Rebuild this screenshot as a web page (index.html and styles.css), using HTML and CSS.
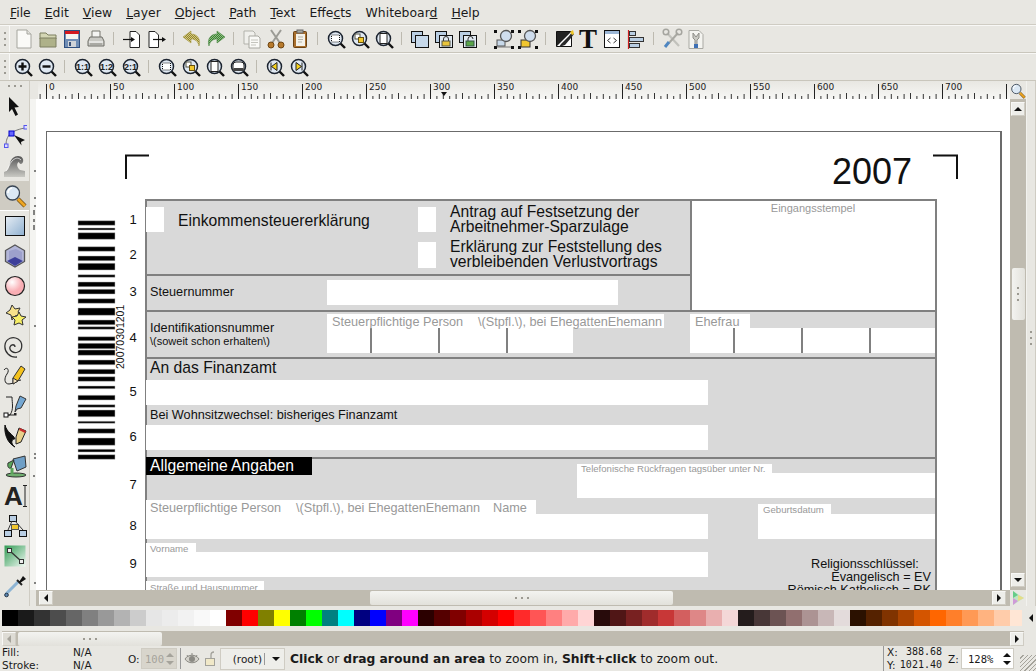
FILE: index.html
```html
<!DOCTYPE html>
<html>

<head>
  <title>Inkscape</title>
  <link rel="stylesheet" href="styles.css">
</head>

<body>
  <svg class="defs" width="0" height="0">
    <defs>
      <pattern id="check-y" patternUnits="userSpaceOnUse" width="2" height="2"><rect width="2" height="2" fill="#d6cb7a" /><rect width="1" height="1" fill="#8f8334" /><rect x="1" y="1" width="1" height="1" fill="#8f8334" /></pattern>
      <pattern id="check-g" patternUnits="userSpaceOnUse" width="2" height="2"><rect width="2" height="2" fill="#8cc47e" /><rect width="1" height="1" fill="#3f7a38" /><rect x="1" y="1" width="1" height="1" fill="#3f7a38" /></pattern>
      <symbol id="lens" viewBox="0 0 24 24">
        <line x1="16.500" y1="16.500" x2="21" y2="21" stroke="#111" stroke-width="2.400" />
        <circle cx="11.500" cy="11.500" r="7" fill="#dfe8f2" stroke="#1c2430" stroke-width="1.500" />
      </symbol>
      <symbol id="i-new" viewBox="0 0 24 24"><path d="M5 3h10l4 4v14H5z" fill="#fafaf7" stroke="#a5a59e" /><path d="M15 3v4h4" fill="#e4e4de" stroke="#a5a59e" /></symbol>
      <symbol id="i-open" viewBox="0 0 24 24"><path d="M4 6h6l2 2h8v4H4z" fill="#d4d6b4" stroke="#7d7f60" /><path d="M4 11h16v9H4z" fill="#aeb189" stroke="#7d7f60" /></symbol>
      <symbol id="i-save" viewBox="0 0 24 24"><rect x="4.500" y="3.500" width="15" height="17" fill="#6f8db5" stroke="#2f4f7f" /><rect x="5" y="4" width="14" height="3" fill="#d3181f" /><rect x="6" y="7" width="12" height="5" fill="#f4f4f0" /><rect x="8" y="14" width="8" height="6" fill="#cfd3d8" /><rect x="9" y="15" width="2" height="4" fill="#38517a" /></symbol>
      <symbol id="i-print" viewBox="0 0 24 24"><path d="M8 4h8v7H8z" fill="#f4f4f2" stroke="#77776f" /><path d="M6 10h12l2 4v5H4v-5z" fill="#c9c9c4" stroke="#6f6f68" /><path d="M5 15h14" stroke="#fff" /><path d="M6 17h12" stroke="#8a8a84" /></symbol>
      <symbol id="i-import" viewBox="0 0 24 24"><path d="M10 4.500h6l3.500 3.500v12.500H10z" fill="#fff" stroke="#222" /><path d="M3 12.500h10" stroke="#111" stroke-width="1.200" /><path d="M11 10l4 2.500-4 2.500z" fill="#111" /></symbol>
      <symbol id="i-export" viewBox="0 0 24 24"><path d="M5 4.500h6l3.500 3.500v12.500H5z" fill="#fff" stroke="#222" /><path d="M9 12.500h10" stroke="#111" stroke-width="1.200" /><path d="M18 10l4 2.500-4 2.500z" fill="#111" /></symbol>
      <symbol id="i-undo" viewBox="0 0 24 24"><path d="M11 4L3 10l8 6v-4c4 0 7 2 8 7 2-6-1-12-8-12z" fill="url(#check-y)" stroke="#a89a45" stroke-width=".6" /></symbol>
      <symbol id="i-redo" viewBox="0 0 24 24"><path d="M13 4l8 6-8 6v-4c-4 0-7 2-8 7-2-6 1-12 8-12z" fill="url(#check-g)" stroke="#4f8a48" stroke-width=".6" /></symbol>
      <symbol id="i-copy" viewBox="0 0 24 24"><path d="M4 4h9l2 2v11H4z" fill="#f0f0ec" stroke="#b2b2ab" /><path d="M9 9h9l2 2v10H9z" fill="#fafaf7" stroke="#a8a8a1" /><path d="M11 13h7M11 15.500h7M11 18h5" stroke="#c4c4bd" /></symbol>
      <symbol id="i-cut" viewBox="0 0 24 24"><path d="M7 3l9 13M17 3L8 16" stroke="#9b9b95" stroke-width="2" /><circle cx="7" cy="18" r="3" fill="#b77a2c" stroke="#6e4512" /><circle cx="17" cy="18" r="3" fill="#b77a2c" stroke="#6e4512" /></symbol>
      <symbol id="i-paste" viewBox="0 0 24 24"><rect x="5.500" y="4.500" width="13" height="16" rx="1" fill="#a96f2d" stroke="#6a4214" /><rect x="8" y="7" width="9" height="12" fill="#f4f2ea" /><rect x="9" y="3" width="6" height="3" fill="#a8a89f" stroke="#666" /><path d="M10 10h5M10 12.500h5M10 15h4" stroke="#b5b3a8" /></symbol>
      <symbol id="z-sel" viewBox="0 0 24 24"><use href="#lens" /><rect x="7.500" y="8" width="8" height="7" fill="#fff" stroke="#111" stroke-dasharray="1 1" /></symbol>
      <symbol id="z-draw" viewBox="0 0 24 24"><use href="#lens" /><rect x="7" y="7" width="5" height="5" fill="#fff" stroke="#554" /><rect x="10.500" y="10.500" width="5" height="5" fill="#f3c92c" stroke="#665010" /></symbol>
      <symbol id="z-page" viewBox="0 0 24 24"><use href="#lens" /><rect x="8" y="6.500" width="7" height="10" fill="#fff" stroke="#222" /></symbol>
      <symbol id="z-width" viewBox="0 0 24 24"><use href="#lens" /><path d="M6 15v-5q0-3 3-3h5q3 0 3 3v5z" fill="#fff" stroke="#222" /><rect x="6.500" y="13" width="10" height="3" fill="#444" /></symbol>
      <symbol id="z-in" viewBox="0 0 24 24"><use href="#lens" /><path d="M7.500 11.500h8M11.500 7.500v8" stroke="#111" stroke-width="2.400" /></symbol>
      <symbol id="z-out" viewBox="0 0 24 24"><use href="#lens" /><path d="M7.500 11.500h8" stroke="#111" stroke-width="2.400" /></symbol>
      <symbol id="z-11" viewBox="0 0 24 24"><use href="#lens" /><text class="lens-text" x="11.500" y="15">1:1</text></symbol>
      <symbol id="z-12" viewBox="0 0 24 24"><use href="#lens" /><text class="lens-text" x="11.500" y="15">1:2</text></symbol>
      <symbol id="z-21" viewBox="0 0 24 24"><use href="#lens" /><text class="lens-text" x="11.500" y="15">2:1</text></symbol>
      <symbol id="z-prev" viewBox="0 0 24 24"><use href="#lens" /><path d="M8.500 11.500L14 7.500v8z" fill="#f6d21e" stroke="#222" /><path d="M8 7.500v8" stroke="#222" /></symbol>
      <symbol id="z-next" viewBox="0 0 24 24"><use href="#lens" /><path d="M14.500 11.500L9 7.500v8z" fill="#f6d21e" stroke="#222" /><path d="M15 7.500v8" stroke="#222" /></symbol>
      <symbol id="i-dup" viewBox="0 0 24 24"><rect x="3.500" y="4.500" width="11" height="11" fill="#b9cee3" stroke="#111" /><rect x="7.500" y="8.500" width="13" height="12" fill="#c7d9ea" stroke="#111" /></symbol>
      <symbol id="i-clone" viewBox="0 0 24 24"><rect x="3.500" y="4.500" width="11" height="11" fill="#b9cee3" stroke="#111" /><rect x="7.500" y="8.500" width="13" height="12" fill="#dfe8f0" stroke="#111" /><path d="M11.500 14v-2a2.500 2.500 0 015 0v2" fill="none" stroke="#333" /><rect x="10" y="14" width="8" height="5" fill="#e9c43a" stroke="#554" /></symbol>
      <symbol id="i-unlink" viewBox="0 0 24 24"><rect x="3.500" y="4.500" width="11" height="11" fill="#b9cee3" stroke="#111" /><rect x="7.500" y="8.500" width="13" height="12" fill="#dfe8f0" stroke="#111" /><path d="M12 14v-2a2.500 2.500 0 015 0" fill="none" stroke="#333" /><rect x="10" y="14" width="8" height="5" fill="#5aa548" stroke="#354" /></symbol>
      <symbol id="i-group" viewBox="0 0 24 24"><path d="M2 3h3v3H2zM19 3h3v3h-3zM2 19h3v3H2zM19 19h3v3h-3z" fill="#111" /><path d="M5 20h14" stroke="#777" /><rect x="5" y="13" width="8" height="6" fill="#c8d9ea" stroke="#555" /><circle cx="14" cy="9" r="5.500" fill="#cfdded" stroke="#555" stroke-width="1.300" /></symbol>
      <symbol id="i-ungroup" viewBox="0 0 24 24"><path d="M2 3h3v3H2zM19 3h3v3h-3zM2 19h3v3H2zM19 19h3v3h-3z" fill="#111" /><rect x="5" y="13" width="9" height="7" fill="#f1c62e" stroke="#333" /><circle cx="14" cy="9" r="5.500" fill="#cfdded" stroke="#555" stroke-width="1.300" /></symbol>
      <symbol id="i-fill" viewBox="0 0 24 24"><path d="M4.500 4.500h15v15h-15z" fill="#222" stroke="#111" /><path d="M5 19L19 5v14z" fill="#fff" /><path d="M9 17l8-8 3-4 2 2-3 4-6 7-6 2z" fill="#2a2a2a" /><path d="M18 5l3-2 1 4-2 1z" fill="#f0c82a" /></symbol>
      <symbol id="i-text" viewBox="0 0 24 24"><text class="big-t" x="12" y="21">T</text></symbol>
      <symbol id="i-xml" viewBox="0 0 24 24"><rect x="4.500" y="3.500" width="15" height="17" fill="#fff" stroke="#111" /><rect x="5" y="4" width="14" height="3" fill="#9cb7d6" /><path d="M10.500 11l-3 2.500 3 2.500M13.500 11l3 2.500-3 2.500" fill="none" stroke="#333" /></symbol>
      <symbol id="i-align" viewBox="0 0 24 24"><path d="M4.500 3v19" stroke="#cc1f1f" stroke-width="1.200" /><rect x="5.500" y="4.500" width="6" height="4" fill="#b9cee3" stroke="#333" /><rect x="5.500" y="10.500" width="14" height="4" fill="#b9cee3" stroke="#333" /><rect x="5.500" y="16.500" width="10" height="4" fill="#b9cee3" stroke="#333" /></symbol>
      <symbol id="i-prefs" viewBox="0 0 24 24"><path d="M7 6l12 13" stroke="#c2c2bc" stroke-width="2.200" /><path d="M18 6L9 16" stroke="#a9a9a3" stroke-width="2" /><path d="M9 15l-4 5" stroke="#4f86c0" stroke-width="3" /><circle cx="6" cy="5" r="2.800" fill="none" stroke="#a5a59f" stroke-width="1.500" /><circle cx="19" cy="5" r="2.800" fill="none" stroke="#a5a59f" stroke-width="1.500" /></symbol>
      <symbol id="i-doc" viewBox="0 0 24 24"><path d="M5 3.500h10l4 4v14H5z" fill="#f4f4f0" stroke="#a9a9a3" /><path d="M9 6l3 4 3-4v5l-2 2v7h-2v-7L9 11z" fill="#c9c9c3" stroke="#8e8e88" /><rect x="10" y="17" width="4" height="4" fill="#3e70b4" /></symbol>

      <symbol id="t-select" viewBox="0 0 24 24"><path d="M6 3l10 10-4.500.5 3.500 7-2.500 1.500-3.500-7L6 18z" fill="#111" /></symbol>
      <symbol id="t-node" viewBox="0 0 24 24"><path d="M3 22c0-8 2-15 19-18" fill="none" stroke="#777" /><rect x="6" y="7" width="5" height="5" fill="#66f" stroke="#00c" /><rect x="21" y="1.500" width="3.500" height="3.500" fill="#ddf" stroke="#55e" /><rect x="1.500" y="20" width="3.500" height="3.500" fill="#ddf" stroke="#55e" /><path d="M11 11l11 5-4 2 .5 3.500z" fill="#111" /></symbol>
      <symbol id="t-tweak" viewBox="0 0 24 24"><defs><linearGradient id="g-tweak" x2="0" y2="1"><stop offset="0" stop-color="#555" /><stop offset="1" stop-color="#c9c9c4" /></linearGradient></defs><path d="M1 23v-5c4-1 5-5 6-9s4-7 8-7 6 3 5 6-4 2-4 0c-3 1-2 6 1 8l5 1v6z" fill="url(#g-tweak)" /><path d="M3 17c3-3 3-7 6-10s6-4 9-1" fill="none" stroke="#fff" stroke-width=".7" /></symbol>
      <symbol id="t-zoom" viewBox="0 0 24 24"><path d="M15 15l7 7" stroke="#6e4a10" stroke-width="4.200" /><path d="M15 15l7 7" stroke="#eda522" stroke-width="2.800" /><circle cx="9.500" cy="9" r="7" fill="#dbe8f4" stroke="#3a4654" stroke-width="1.300" /><path d="M5 9a5 5 0 014-5" fill="none" stroke="#fff" stroke-width="1.500" /></symbol>
      <symbol id="t-rect" viewBox="0 0 24 24"><defs><linearGradient id="g-rect" x2="1" y2="1"><stop offset="0" stop-color="#e6edf4" /><stop offset="1" stop-color="#8fb0d0" /></linearGradient></defs><rect x="2.500" y="2.500" width="19" height="19" fill="url(#g-rect)" stroke="#111" /></symbol>
      <symbol id="t-box" viewBox="0 0 24 24"><path d="M12 1l9.500 5.500v11L12 23l-9.500-5.500v-11z" fill="#b3b6d8" stroke="#555" stroke-width="1.300" /><path d="M6 7l7-2 6 3v8l-13 0z" fill="#9da0cc" /><path d="M4 17l8-4 8 4-8 5z" fill="#3d3f9a" /></symbol>
      <symbol id="t-ell" viewBox="0 0 24 24"><defs><radialGradient id="g-ell" cx=".35" cy=".3"><stop offset="0" stop-color="#fff" /><stop offset="1" stop-color="#f9aeb4" /></radialGradient></defs><circle cx="12" cy="12" r="9.500" fill="url(#g-ell)" stroke="#222" stroke-width="1.200" /></symbol>
      <symbol id="t-star" viewBox="0 0 24 24"><path d="M9 1l3 4 5-1-2 4 2 3-5 1-3 4-1-5-5-2 4-3z" fill="#f7e28b" stroke="#333" /><path d="M16 8l2 4 5 1-4 3 1 5-4-2-5 2 1-5-3-3 5-1z" fill="#f6ee66" stroke="#333" /></symbol>
      <symbol id="t-spiral" viewBox="0 0 24 24"><path d="M12 13c0-3-4-3-5 0s3 7 8 5 5-10 0-13S3 4 2 11s5 13 12 12" fill="none" stroke="#333" stroke-width="1.300" /></symbol>
      <symbol id="t-pencil" viewBox="0 0 24 24"><path d="M1 6c3-4 6 0 3 4s-3 10 2 10 8-4 12-4" fill="none" stroke="#222" /><path d="M18 2l4 3-7 12-5 3 0-6z" fill="#f4c21c" stroke="#333" /><path d="M10 20l0-6 5 3z" fill="#f3e2c0" stroke="#333" /></symbol>
      <symbol id="t-pen" viewBox="0 0 24 24"><path d="M3 3h6c0 6 2 12-2 18H3" fill="none" stroke="#222" /><rect x="1" y="19" width="4" height="4" fill="#fff" stroke="#111" /><path d="M5 21h6" stroke="#222" /><rect x="11" y="19" width="2.500" height="2.500" fill="#222" /><path d="M17 2l6 3-5 9-4 1-2 3 1-6z" fill="#74a7d2" stroke="#333" /></symbol>
      <symbol id="t-callig" viewBox="0 0 24 24"><path d="M2 1c-1 8 2 18 10 22-6-4-2-9 0-8-2-5-8-6-10-14z" fill="#111" stroke="#111" /><path d="M16 4l7 3-5 11-5 2 0-7z" fill="#e8d08a" stroke="#222" /><path d="M17 4l6 3-1 2-6-3z" fill="#c92c2c" /></symbol>
      <symbol id="t-bucket" viewBox="0 0 24 24"><ellipse cx="13" cy="21" rx="10" ry="2" fill="#6fae6f" stroke="#333" /><path d="M10 5l12-3 1 11-9 4z" fill="#6f9fc6" stroke="#333" /><path d="M5 9c-1 4 1 6 3 5l3-8z" fill="#5aa55a" stroke="#333" /><path d="M9 14v6" stroke="#5aa55a" stroke-width="3" /></symbol>
      <symbol id="t-text" viewBox="0 0 24 24"><text class="big-a" x="1" y="21">A</text><path d="M20 1.500h4M22 1.500v21M20 22.500h4" stroke="#222" fill="none" /></symbol>
      <symbol id="t-tree" viewBox="0 0 24 24"><rect x="6.500" y="1.500" width="7" height="6" fill="#b9cee3" stroke="#111" /><rect x="8.500" y="10.500" width="7" height="5" fill="#f1c62e" stroke="#555" /><rect x="1.500" y="16.500" width="7" height="6" fill="#b9cee3" stroke="#111" /><rect x="16.500" y="16.500" width="7" height="6" fill="#b9cee3" stroke="#111" /><path d="M9 7L5 16M12 7l8 9" fill="none" stroke="#333" /></symbol>
      <symbol id="t-conn" viewBox="0 0 24 24"><defs><linearGradient id="g-conn" x2="1" y2="1"><stop offset="0" stop-color="#2f9a52" /><stop offset="1" stop-color="#f2f9f4" /></linearGradient></defs><rect x="1.500" y="1.500" width="21" height="21" fill="url(#g-conn)" /><path d="M7 7l11 10" stroke="#333" stroke-width="1.300" /><rect x="4.500" y="4.500" width="4" height="4" fill="#eee" stroke="#333" /><rect x="16.500" y="15.500" width="4" height="4" fill="#eee" stroke="#333" /></symbol>
      <symbol id="t-drop" viewBox="0 0 24 24"><path d="M16 7L3 20" stroke="#8db4d4" stroke-width="3" /><path d="M14 6l5 5" stroke="#222" stroke-width="2" /><path d="M16 8l4-6 3 3-6 4z" fill="#111" /><circle cx="3.500" cy="21" r="1.800" fill="#5c88b5" stroke="#234" /></symbol>
      <symbol id="s-eye" viewBox="0 0 16 16"><path d="M1 8c3-5 11-5 14 0-3 5-11 5-14 0z" fill="#d4d2cb" stroke="#8b8a84" /><circle cx="8" cy="8" r="3" fill="#8b8a84" /><path d="M3 4l1 2M8 2v2M13 4l-1 2" stroke="#8b8a84" /></symbol>
      <symbol id="s-lock" viewBox="0 0 16 16"><path d="M9 7V4a3 3 0 013-3" fill="none" stroke="#a3a29b" stroke-width="1.300" /><rect x="3.500" y="7.500" width="9" height="7" fill="#f0e8c8" stroke="#a3a29b" /></symbol>
      <symbol id="s-color" viewBox="0 0 16 16"><path d="M3 1l11 7-11 7z" fill="#bfe6c4" /><path d="M3 1v7l5-3z" fill="#66cc88" /><path d="M3 15v-7l5 3z" fill="#cf9ad8" /><path d="M8 5l6 3-6 3z" fill="#e6dd88" /></symbol>
    </defs>
  </svg>

  <nav class="menubar">
    <span class="menu-item"><u>F</u>ile</span>
    <span class="menu-item"><u>E</u>dit</span>
    <span class="menu-item"><u>V</u>iew</span>
    <span class="menu-item"><u>L</u>ayer</span>
    <span class="menu-item"><u>O</u>bject</span>
    <span class="menu-item"><u>P</u>ath</span>
    <span class="menu-item"><u>T</u>ext</span>
    <span class="menu-item">Effe<u>c</u>ts</span>
    <span class="menu-item">Whiteboar<u>d</u></span>
    <span class="menu-item"><u>H</u>elp</span>
  </nav>

  <div class="toolbar">
    <span class="handle"><i class="grip-v"></i></span>
    <svg class="tool"><use href="#i-new" /></svg>
    <svg class="tool"><use href="#i-open" /></svg>
    <svg class="tool"><use href="#i-save" /></svg>
    <svg class="tool"><use href="#i-print" /></svg>
    <span class="sep"></span>
    <svg class="tool"><use href="#i-import" /></svg>
    <svg class="tool"><use href="#i-export" /></svg>
    <span class="sep"></span>
    <svg class="tool"><use href="#i-undo" /></svg>
    <svg class="tool"><use href="#i-redo" /></svg>
    <span class="sep"></span>
    <svg class="tool"><use href="#i-copy" /></svg>
    <svg class="tool"><use href="#i-cut" /></svg>
    <svg class="tool"><use href="#i-paste" /></svg>
    <span class="sep"></span>
    <svg class="tool"><use href="#z-sel" /></svg>
    <svg class="tool"><use href="#z-draw" /></svg>
    <svg class="tool"><use href="#z-page" /></svg>
    <span class="sep"></span>
    <svg class="tool"><use href="#i-dup" /></svg>
    <svg class="tool"><use href="#i-clone" /></svg>
    <svg class="tool"><use href="#i-unlink" /></svg>
    <span class="sep"></span>
    <svg class="tool"><use href="#i-group" /></svg>
    <svg class="tool"><use href="#i-ungroup" /></svg>
    <span class="sep"></span>
    <svg class="tool"><use href="#i-fill" /></svg>
    <svg class="tool"><use href="#i-text" /></svg>
    <svg class="tool"><use href="#i-xml" /></svg>
    <svg class="tool"><use href="#i-align" /></svg>
    <span class="sep"></span>
    <svg class="tool"><use href="#i-prefs" /></svg>
    <svg class="tool"><use href="#i-doc" /></svg>
  </div>

  <div class="toolbar toolbar-zoom">
    <span class="handle"><i class="grip-v"></i></span>
    <svg class="tool"><use href="#z-in" /></svg>
    <svg class="tool"><use href="#z-out" /></svg>
    <span class="sep"></span>
    <svg class="tool"><use href="#z-11" /></svg>
    <svg class="tool"><use href="#z-12" /></svg>
    <svg class="tool"><use href="#z-21" /></svg>
    <span class="sep"></span>
    <svg class="tool"><use href="#z-sel" /></svg>
    <svg class="tool"><use href="#z-draw" /></svg>
    <svg class="tool"><use href="#z-page" /></svg>
    <svg class="tool"><use href="#z-width" /></svg>
    <span class="sep"></span>
    <svg class="tool"><use href="#z-prev" /></svg>
    <svg class="tool"><use href="#z-next" /></svg>
  </div>

  <div class="workspace">
    <aside class="toolbox">
      <span class="toolbox-grip"><i class="grip-h"></i></span>
      <span class="tbtn"><svg class="tbtn-icon"><use href="#t-select" /></svg></span>
      <span class="tbtn"><svg class="tbtn-icon"><use href="#t-node" /></svg></span>
      <span class="tbtn"><svg class="tbtn-icon"><use href="#t-tweak" /></svg></span>
      <span class="tbtn tbtn-active"><svg class="tbtn-icon"><use href="#t-zoom" /></svg></span>
      <span class="tbtn"><svg class="tbtn-icon"><use href="#t-rect" /></svg></span>
      <span class="tbtn"><svg class="tbtn-icon"><use href="#t-box" /></svg></span>
      <span class="tbtn"><svg class="tbtn-icon"><use href="#t-ell" /></svg></span>
      <span class="tbtn"><svg class="tbtn-icon"><use href="#t-star" /></svg></span>
      <span class="tbtn"><svg class="tbtn-icon"><use href="#t-spiral" /></svg></span>
      <span class="tbtn"><svg class="tbtn-icon"><use href="#t-pencil" /></svg></span>
      <span class="tbtn"><svg class="tbtn-icon"><use href="#t-pen" /></svg></span>
      <span class="tbtn"><svg class="tbtn-icon"><use href="#t-callig" /></svg></span>
      <span class="tbtn"><svg class="tbtn-icon"><use href="#t-bucket" /></svg></span>
      <span class="tbtn"><svg class="tbtn-icon"><use href="#t-text" /></svg></span>
      <span class="tbtn"><svg class="tbtn-icon"><use href="#t-tree" /></svg></span>
      <span class="tbtn"><svg class="tbtn-icon"><use href="#t-conn" /></svg></span>
      <span class="tbtn"><svg class="tbtn-icon"><use href="#t-drop" /></svg></span>
    </aside>

    <div class="center">
      <svg class="hruler" width="980" height="18" viewBox="30 81 980 18">
        <defs>
          <pattern id="ticks" patternUnits="userSpaceOnUse" x="46" y="81" width="64" height="18">
            <rect x="0" y="3" width="1" height="15" fill="#222" />
            <rect x="6.400" y="15" width="1" height="3" fill="#333" />
            <rect x="12.800" y="13" width="1" height="5" fill="#333" />
            <rect x="19.200" y="15" width="1" height="3" fill="#333" />
            <rect x="25.600" y="13" width="1" height="5" fill="#333" />
            <rect x="32" y="12" width="1" height="6" fill="#333" />
            <rect x="38.400" y="15" width="1" height="3" fill="#333" />
            <rect x="44.800" y="13" width="1" height="5" fill="#333" />
            <rect x="51.200" y="15" width="1" height="3" fill="#333" />
            <rect x="57.600" y="13" width="1" height="5" fill="#333" />
          </pattern>
          <linearGradient id="ruler-bg" x2="0" y2="1">
            <stop offset="0" stop-color="#e8e7e2" />
            <stop offset="1" stop-color="#f7f7f5" />
          </linearGradient>
        </defs>
        <rect x="30" y="81" width="980" height="18" fill="url(#ruler-bg)" />
        <rect x="30" y="81" width="980" height="18" fill="url(#ticks)" />
        <rect x="30" y="81" width="8" height="18" fill="#e8e7e2" />
        <g class="ruler-label">
          <text x="49" y="90">0</text>
          <text x="113" y="90">50</text>
          <text x="177" y="90">100</text>
          <text x="241" y="90">150</text>
          <text x="305" y="90">200</text>
          <text x="369" y="90">250</text>
          <text x="433" y="90">300</text>
          <text x="497" y="90">350</text>
          <text x="561" y="90">400</text>
          <text x="625" y="90">450</text>
          <text x="689" y="90">500</text>
          <text x="753" y="90">550</text>
          <text x="817" y="90">600</text>
          <text x="881" y="90">650</text>
          <text x="945" y="90">700</text>
        </g>
        <path d="M441 92h6l-3 4z" fill="#111" />
      </svg>

      <div class="canvas-row">
        <svg class="vruler" width="6" height="491" viewBox="30 99 6 491">
          <rect x="30" y="99" width="6" height="491" fill="#f4f4f1" />
          <path d="M34 171h2M34 198h2M34 206h2M34 210v5M34 219v3M34 225v5M34 326h2M34 454h2M34 458h2M34 475v2M34 583h2" stroke="#111" fill="none" />
        </svg>

        <svg class="drawing" width="974" height="491" viewBox="36 99 974 491">
          <rect x="46.500" y="131.500" width="954" height="600" fill="#fff" stroke="#6b6b6b" />
          <rect x="999.500" y="131" width="2.500" height="460" fill="#6b6b6b" />

          <path d="M126 179v-23.500h23M933 155.500h24V179" fill="none" stroke="#111" stroke-width="2" />
          <text class="doc-year" x="832" y="184">2007</text>

          <path class="bars" d="M78 220.700h37v4.600H78zM78 228h37v2H78zM78 232.700h37v6.600H78zM78 246.700h37v4.600H78zM78 256h37v4.700H78zM78 263.300h37v6.700H78zM78 274.700h37v2.600H78zM78 282h37v4.700H78zM78 289.300h37v4.700H78zM78 298.700h37v4.600H78zM78 308h37v7.300H78zM78 320h37v4.700H78zM78 326.700h37v2.600H78zM78 336.700h37v4H78zM78 343.300h37v5.400H78zM78 350h37v5.300H78zM78 360h37v4.700H78zM78 369.300h37v4.700H78zM78 376.700h37v4.600H78zM78 386h37v2.700H78zM78 395.300h37v4.700H78zM78 404.700h37v2.600H78zM78 410h37v6.700H78zM78 421.300h37v2H78zM78 428.700h37v4.600H78zM78 438h37v7.300H78zM78 449.300h37v2.700H78zM78 454.700h37v4.600H78z" />
          <text class="doc-code" transform="translate(124 369) rotate(-90)">20070301201</text>

          <g class="doc-num">
            <text x="133" y="224">1</text>
            <text x="133" y="259">2</text>
            <text x="133" y="296">3</text>
            <text x="133" y="342">4</text>
            <text x="133" y="396">5</text>
            <text x="133" y="441">6</text>
            <text x="133" y="489">7</text>
            <text x="133" y="530">8</text>
            <text x="133" y="568">9</text>
          </g>

          <rect x="146" y="200" width="790" height="400" fill="#d9d9d9" />
          <rect x="691" y="200" width="245" height="110" fill="#fff" />
          <path class="rule" d="M145.500 199v401M145 200h792M936 199v401M691 199v111M146 274.500h545M146 310.500h790M146 358h790M146 458h790" />

          <g fill="#fff">
            <rect x="146" y="207" width="18" height="25" />
            <rect x="418" y="207" width="18" height="25" />
            <rect x="418" y="242" width="18" height="26" />
            <rect x="327" y="280" width="291" height="25" />
            <rect x="327" y="314" width="337" height="14" />
            <rect x="327" y="328" width="246" height="25" />
            <rect x="690" y="314" width="60" height="14" />
            <rect x="690" y="328" width="245" height="25" />
            <rect x="146" y="380" width="562" height="25" />
            <rect x="146" y="425" width="562" height="25" />
            <rect x="577" y="464" width="195" height="10" />
            <rect x="577" y="473" width="358" height="25" />
            <rect x="146" y="500" width="390" height="14" />
            <rect x="146" y="514" width="562" height="25" />
            <rect x="758" y="504" width="73" height="11" />
            <rect x="758" y="514" width="177" height="25" />
            <rect x="146" y="543" width="50" height="10" />
            <rect x="146" y="552" width="562" height="25" />
            <rect x="146" y="581" width="118" height="10" />
          </g>
          <path class="rule" d="M371 328v25M439 328v25M507 328v25M734 328v25M802 328v25M870 328v25" />
          <rect x="146" y="457" width="166" height="18" fill="#000" />

          <text class="doc-lg" x="178" y="226">Einkommensteuererklärung</text>
          <text class="doc-lg" x="450" y="217">Antrag auf Festsetzung der</text>
          <text class="doc-lg" x="450" y="232">Arbeitnehmer-Sparzulage</text>
          <text class="doc-lg" x="450" y="252">Erklärung zur Feststellung des</text>
          <text class="doc-lg" x="450" y="267">verbleibenden Verlustvortrags</text>
          <text class="doc-md" x="150" y="296">Steuernummer</text>
          <text class="doc-md" x="150" y="332">Identifikationsnummer</text>
          <text class="doc-sm" x="150" y="345">\(soweit schon erhalten\)</text>
          <text class="doc-md doc-grey" x="332" y="326">Steuerpflichtige Person</text>
          <text class="doc-md doc-grey" x="478" y="326">\(Stpfl.\), bei EhegattenEhemann</text>
          <text class="doc-md doc-grey" x="695" y="326">Ehefrau</text>
          <text class="doc-sm doc-grey doc-mid" x="813" y="212">Eingangsstempel</text>
          <text class="doc-lg" x="150" y="373">An das Finanzamt</text>
          <text class="doc-md" x="150" y="419">Bei Wohnsitzwechsel: bisheriges Finanzamt</text>
          <text class="doc-lg doc-white" x="150" y="471">Allgemeine Angaben</text>
          <text class="doc-xs doc-grey" x="581" y="472">Telefonische Rückfragen tagsüber unter Nr.</text>
          <text class="doc-md doc-grey" x="150" y="512">Steuerpflichtige Person</text>
          <text class="doc-md doc-grey" x="296" y="512">\(Stpfl.\), bei EhegattenEhemann</text>
          <text class="doc-md doc-grey" x="493" y="512">Name</text>
          <text class="doc-xs doc-grey" x="763" y="513">Geburtsdatum</text>
          <text class="doc-xs doc-grey" x="150" y="552">Vorname</text>
          <text class="doc-xs doc-grey" x="150" y="591">Straße und Hausnummer</text>
          <text class="doc-md" x="811" y="568">Religionsschlüssel:</text>
          <text class="doc-md doc-end" x="931" y="581">Evangelisch = EV</text>
          <text class="doc-md doc-end" x="931" y="594">Römisch Katholisch = RK</text>
        </svg>
      </div>

      <div class="hscroll">
        <span class="scroll-btn"><i class="arrow-left"></i></span>
        <span class="hscroll-gap"></span>
        <span class="hscroll-thumb"><i class="grip-h"></i></span>
        <span class="hscroll-rest"></span>
        <span class="scroll-btn"><i class="arrow-right"></i></span>
      </div>
    </div>

    <div class="vscroll-col">
      <svg class="corner-zoom"><use href="#t-zoom" /></svg>
      <div class="vscroll">
        <span class="scroll-btn"><i class="arrow-up"></i></span>
        <span class="vscroll-gap"></span>
        <span class="vscroll-thumb"><i class="grip-v"></i></span>
        <span class="vscroll-rest"></span>
        <span class="scroll-btn"><i class="arrow-down"></i></span>
      </div>
      <svg class="color-icon"><use href="#s-color" /></svg>
    </div>

    <div class="dock-strip"><i class="grip-v"></i></div>
  </div>

  <div class="palette-row">
    <svg class="palette" width="1020" height="16" viewBox="0 0 1020 16">
      <g>
        <rect x="0" width="16" height="16" fill="#000000" />
        <rect x="16" width="16" height="16" fill="#1a1a1a" />
        <rect x="32" width="16" height="16" fill="#333333" />
        <rect x="48" width="16" height="16" fill="#4d4d4d" />
        <rect x="64" width="16" height="16" fill="#666666" />
        <rect x="80" width="16" height="16" fill="#808080" />
        <rect x="96" width="16" height="16" fill="#999999" />
        <rect x="112" width="16" height="16" fill="#b3b3b3" />
        <rect x="128" width="16" height="16" fill="#cccccc" />
        <rect x="144" width="16" height="16" fill="#e6e6e6" />
        <rect x="160" width="16" height="16" fill="#ececec" />
        <rect x="176" width="16" height="16" fill="#f2f2f2" />
        <rect x="192" width="16" height="16" fill="#f9f9f9" />
        <rect x="208" width="16" height="16" fill="#ffffff" />
        <rect x="224" width="16" height="16" fill="#800000" />
        <rect x="240" width="16" height="16" fill="#ff0000" />
        <rect x="256" width="16" height="16" fill="#808000" />
        <rect x="272" width="16" height="16" fill="#ffff00" />
        <rect x="288" width="16" height="16" fill="#008000" />
        <rect x="304" width="16" height="16" fill="#00ff00" />
        <rect x="320" width="16" height="16" fill="#008080" />
        <rect x="336" width="16" height="16" fill="#00ffff" />
        <rect x="352" width="16" height="16" fill="#000080" />
        <rect x="368" width="16" height="16" fill="#0000ff" />
        <rect x="384" width="16" height="16" fill="#800080" />
        <rect x="400" width="16" height="16" fill="#ff00ff" />
        <rect x="416" width="16" height="16" fill="#2b0000" />
        <rect x="432" width="16" height="16" fill="#550000" />
        <rect x="448" width="16" height="16" fill="#800000" />
        <rect x="464" width="16" height="16" fill="#aa0000" />
        <rect x="480" width="16" height="16" fill="#d40000" />
        <rect x="496" width="16" height="16" fill="#ff0000" />
        <rect x="512" width="16" height="16" fill="#ff2a2a" />
        <rect x="528" width="16" height="16" fill="#ff5555" />
        <rect x="544" width="16" height="16" fill="#ff8080" />
        <rect x="560" width="16" height="16" fill="#ffaaaa" />
        <rect x="576" width="16" height="16" fill="#ffd5d5" />
        <rect x="592" width="16" height="16" fill="#280b0b" />
        <rect x="608" width="16" height="16" fill="#501616" />
        <rect x="624" width="16" height="16" fill="#782121" />
        <rect x="640" width="16" height="16" fill="#a02c2c" />
        <rect x="656" width="16" height="16" fill="#c83737" />
        <rect x="672" width="16" height="16" fill="#d35f5f" />
        <rect x="688" width="16" height="16" fill="#de8787" />
        <rect x="704" width="16" height="16" fill="#e9afaf" />
        <rect x="720" width="16" height="16" fill="#f4d7d7" />
        <rect x="736" width="16" height="16" fill="#241c1c" />
        <rect x="752" width="16" height="16" fill="#483737" />
        <rect x="768" width="16" height="16" fill="#6c5353" />
        <rect x="784" width="16" height="16" fill="#916f6f" />
        <rect x="800" width="16" height="16" fill="#ac9393" />
        <rect x="816" width="16" height="16" fill="#c8b7b7" />
        <rect x="832" width="16" height="16" fill="#e3dbdb" />
        <rect x="848" width="16" height="16" fill="#2b1100" />
        <rect x="864" width="16" height="16" fill="#552200" />
        <rect x="880" width="16" height="16" fill="#803300" />
        <rect x="896" width="16" height="16" fill="#aa4400" />
        <rect x="912" width="16" height="16" fill="#d45500" />
        <rect x="928" width="16" height="16" fill="#ff6600" />
        <rect x="944" width="16" height="16" fill="#ff7f2a" />
        <rect x="960" width="16" height="16" fill="#ff9955" />
        <rect x="976" width="16" height="16" fill="#ffb380" />
        <rect x="992" width="16" height="16" fill="#ffccaa" />
        <rect x="1008" width="16" height="16" fill="#ffe6d5" />
      </g>
    </svg>
    <i class="arrow-left palette-menu"></i>
  </div>

  <div class="palette-scroll">
    <span class="scroll-btn scroll-btn-off"><i class="arrow-left arrow-off"></i></span>
    <span class="palette-thumb"><i class="grip-h"></i></span>
    <span class="hscroll-rest"></span>
    <span class="scroll-btn"><i class="arrow-right"></i></span>
  </div>

  <footer class="statusbar">
    <div class="style-labels">
      <span>Fill:</span>
      <span>Stroke:</span>
    </div>
    <div class="style-values">
      <span>N/A</span>
      <span>N/A</span>
    </div>
    <span class="opacity-label">O:</span>
    <span class="spin spin-off">100<span class="spin-btns"><i class="arrow-up arrow-off"></i><i class="arrow-down arrow-off"></i></span></span>
    <span class="status-sep"></span>
    <svg class="status-icon"><use href="#s-eye" /></svg>
    <svg class="status-icon"><use href="#s-lock" /></svg>
    <span class="layer-combo"><span class="layer-name">(root)</span><i class="arrow-down"></i></span>
    <span class="message"><b>Click</b> or <b>drag around an area</b> to zoom in, <b>Shift+click</b> to zoom out.</span>
    <div class="coords">
      <span>X:<b>388.68</b></span>
      <span>Y:<b>1021.40</b></span>
    </div>
    <span class="zoom-label">Z:</span>
    <span class="spin spin-zoom">128%<span class="spin-btns"><i class="arrow-up"></i><i class="arrow-down"></i></span></span>
    <span class="resize-grip"></span>
  </footer>
</body>

</html>
```

FILE: styles.css
```css
html, body {
    margin: 0;
    height: 671px;
    overflow: hidden;
}

body {
    width: 1036px;
    font-family: "DejaVu Sans", sans-serif;
    font-size: 12px;
    color: #1a1a1a;
    background-color: #e8e7e2;
}

.defs {
    position: absolute;
}

i {
    display: block;
}

/* menu and toolbars */
.menubar {
    display: flex;
    align-items: center;
    box-sizing: content-box;
    height: 22px;
    padding: 2px 0 0 3px;
    border-bottom: 1px solid #cfccc3;
    font-size: 12.400px;
    line-height: 22px;
}

.menu-item {
    padding: 0 7px;
}

.toolbar {
    display: flex;
    align-items: center;
    height: 26px;
    border-top: 1px solid #f8f8f6;
    border-bottom: 1px solid #c9c6bc;
}

.handle {
    display: flex;
    justify-content: center;
    align-items: center;
    width: 10px;
    height: 26px;
    margin-right: 2px;
    border-right: 1px solid #f8f8f6;
    box-sizing: border-box;
}

.toolbar-zoom .handle {
    margin-right: 1px;
}

.grip-v {
    width: 2px;
    height: 14px;
    background: repeating-linear-gradient(#9c9a92 0 2px, transparent 2px 6px);
}

.grip-h {
    width: 14px;
    height: 2px;
    background: repeating-linear-gradient(90deg, #9c9a92 0 2px, transparent 2px 6px);
}

.tool {
    flex: none;
    width: 24px;
    height: 24px;
}

.sep {
    flex: none;
    position: relative;
    width: 12px;
    height: 22px;
}

.sep::after {
    content: "";
    position: absolute;
    left: 5px;
    top: 4px;
    width: 1px;
    height: 13px;
    background-color: #bdbab0;
}

.lens-text {
    font-family: "Liberation Sans", sans-serif;
    font-size: 9px;
    font-weight: bold;
    text-anchor: middle;
    fill: #222;
}

.big-t {
    font-family: "Liberation Serif", serif;
    font-size: 27px;
    font-weight: bold;
    text-anchor: middle;
    fill: #111;
}

.big-a {
    font-family: "Liberation Sans", sans-serif;
    font-size: 26px;
    font-weight: bold;
    fill: #222;
}

/* middle part */
.workspace {
    display: flex;
    height: 525px;
}

.toolbox {
    flex: none;
    display: flex;
    flex-direction: column;
    width: 29px;
    border-right: 1px solid #cfccc3;
}

.toolbox-grip {
    display: flex;
    justify-content: center;
    align-items: center;
    height: 10px;
}

.tbtn {
    flex: none;
    display: flex;
    justify-content: center;
    align-items: center;
    height: 30px;
}

.tbtn-icon {
    width: 24px;
    height: 24px;
}

.tbtn-active {
    background-color: #cfccc3;
    border-bottom: 1px solid #fff;
    height: 29px;
}

.center {
    flex: none;
    width: 980px;
}

.hruler, .vruler, .drawing {
    display: block;
    flex: none;
}

.ruler-label {
    font-family: "DejaVu Sans", sans-serif;
    font-size: 9px;
    fill: #222;
}

.canvas-row {
    display: flex;
    height: 491px;
    background-color: #fff;
}

.drawing rect, .drawing .rule {
    shape-rendering: crispEdges;
}

.rule {
    fill: none;
    stroke: #808080;
    stroke-width: 2;
}

.bars {
    fill: #000;
    stroke: #bbb;
    stroke-width: 0.5;
}

.drawing text {
    font-family: "Liberation Sans", sans-serif;
    fill: #111;
}

.drawing .doc-year { font-size: 36px; }
.drawing .doc-code { font-size: 10.500px; }
.drawing .doc-num { font-size: 13px; text-anchor: middle; }
.drawing .doc-lg { font-size: 15.700px; }
.drawing .doc-md { font-size: 12.700px; }
.drawing .doc-sm { font-size: 11px; }
.drawing .doc-xs { font-size: 9.600px; }
.drawing .doc-grey { fill: #999; }
.drawing .doc-white { fill: #fff; }
.drawing .doc-mid { text-anchor: middle; }
.drawing .doc-end { text-anchor: end; }

/* scrollbars */
.scroll-btn {
    flex: none;
    display: flex;
    justify-content: center;
    align-items: center;
    box-sizing: border-box;
    width: 14px;
    height: 14px;
    background-color: #eeeeea;
    border: 1px solid #f8f8f6;
    border-right-color: #cfccc3;
    border-bottom-color: #cfccc3;
}

.scroll-btn-off {
    background-color: #dedcd5;
}

.arrow-left, .arrow-right {
    width: 0;
    height: 0;
    border-top: 4px solid transparent;
    border-bottom: 4px solid transparent;
}

.arrow-left {
    border-right: 4px solid #111;
}

.arrow-right {
    border-left: 4px solid #111;
}

.arrow-up, .arrow-down {
    width: 0;
    height: 0;
    border-left: 4px solid transparent;
    border-right: 4px solid transparent;
}

.arrow-up {
    border-bottom: 4px solid #111;
}

.arrow-down {
    border-top: 4px solid #111;
}

.arrow-left.arrow-off {
    border-right-color: #a5a39b;
}

.arrow-up.arrow-off {
    border-bottom-color: #a5a39b;
}

.arrow-down.arrow-off {
    border-top-color: #a5a39b;
}

.hscroll {
    display: flex;
    align-items: center;
    height: 16px;
    margin-left: 6px;
    padding: 0 4px 0 3px;
    background-color: #bfbbb0;
}

.hscroll-gap {
    flex: none;
    width: 317px;
}

.hscroll-thumb, .palette-thumb {
    flex: none;
    display: flex;
    justify-content: center;
    align-items: center;
    height: 14px;
    background: linear-gradient(#f3f3f0, #e2e1db);
    border-radius: 2px;
}

.hscroll-thumb {
    width: 303px;
}

.hscroll-rest, .vscroll-rest {
    flex: 1;
}

.vscroll-col {
    flex: none;
    display: flex;
    flex-direction: column;
    width: 16px;
}

.corner-zoom {
    display: block;
    flex: none;
    width: 16px;
    height: 16px;
    margin-top: 2px;
}

.vscroll {
    display: flex;
    flex-direction: column;
    align-items: center;
    height: 491px;
    padding: 3px 0;
    box-sizing: border-box;
    background-color: #bfbbb0;
}

.vscroll-gap {
    flex: none;
    height: 152px;
}

.vscroll-thumb {
    flex: none;
    display: flex;
    justify-content: center;
    align-items: center;
    width: 13px;
    height: 52px;
    background: linear-gradient(90deg, #f3f3f0, #e2e1db);
    border-radius: 2px;
}

.color-icon {
    display: block;
    flex: none;
    width: 16px;
    height: 16px;
}

.dock-strip {
    flex: none;
    display: flex;
    justify-content: center;
    align-items: center;
    box-sizing: border-box;
    width: 10px;
    padding-bottom: 12px;
    border-left: 1px solid #f2f2ef;
    border-right: 1px solid #cfccc3;
}

/* palette */
.palette-row {
    display: flex;
    align-items: center;
    height: 25px;
    padding: 0 0 1px 2px;
    box-sizing: border-box;
}

.palette {
    display: block;
    flex: none;
}

.palette-menu {
    margin-left: 7px;
}

.palette-scroll {
    display: flex;
    align-items: center;
    box-sizing: border-box;
    width: 1022px;
    height: 15px;
    margin-left: 2px;
    background-color: #bfbbb0;
}

.palette-thumb {
    width: 144px;
    margin-left: 2px;
}

/* status bar */
.statusbar {
    display: flex;
    align-items: center;
    height: 25px;
    font-size: 10.500px;
}

.style-labels, .style-values {
    flex: none;
    display: flex;
    flex-direction: column;
    line-height: 12.500px;
}

.style-labels {
    width: 71px;
    padding-left: 2px;
}

.style-values {
    width: 55px;
}

.opacity-label {
    width: 13px;
}

.spin {
    flex: none;
    display: flex;
    align-items: center;
    justify-content: space-between;
    box-sizing: border-box;
    height: 21px;
    border: 1px solid #cfccc3;
    font-family: "DejaVu Sans Mono", monospace;
    font-size: 10.500px;
}

.spin-off {
    width: 36px;
    padding-left: 3px;
    background-color: #d8d5cc;
    color: #a5a39b;
}

.spin-zoom {
    width: 53px;
    padding-left: 6px;
    background-color: #fff;
}

.spin-btns {
    display: flex;
    flex-direction: column;
    align-items: center;
    gap: 4px;
    padding: 0 2px;
}

.status-sep {
    width: 1px;
    height: 21px;
    margin: 0 3px;
    background-color: #999;
}

.status-icon {
    flex: none;
    width: 16px;
    height: 16px;
    margin-right: 2px;
}

.layer-combo {
    flex: none;
    display: flex;
    align-items: center;
    box-sizing: border-box;
    width: 65px;
    height: 22px;
    border: 1px solid #cfccc3;
    background-color: #eeeeea;
}

.layer-name {
    width: 41px;
    padding-right: 2px;
    border-right: 1px solid #999;
    text-align: right;
    margin-right: 7px;
}

.message {
    flex: none;
    width: 598px;
    padding-left: 5px;
    font-size: 12.300px;
    white-space: nowrap;
    box-sizing: border-box;
}

.coords {
    flex: none;
    display: flex;
    flex-direction: column;
    width: 66px;
    padding-left: 3px;
    box-sizing: border-box;
    border-left: 1px solid #999;
    line-height: 12.500px;
}

.coords span {
    display: flex;
    justify-content: space-between;
    padding-right: 7px;
}

.coords b {
    font-family: "DejaVu Sans Mono", monospace;
    font-size: 10px;
    font-weight: normal;
}

.zoom-label {
    flex: none;
    width: 13px;
    margin-left: -1px;
}

.resize-grip {
    flex: none;
    width: 16px;
    height: 16px;
    margin-left: 6px;
    align-self: flex-end;
    background: repeating-linear-gradient(135deg, transparent 0 2px, #a5a39b 2px 3px);
}
```
